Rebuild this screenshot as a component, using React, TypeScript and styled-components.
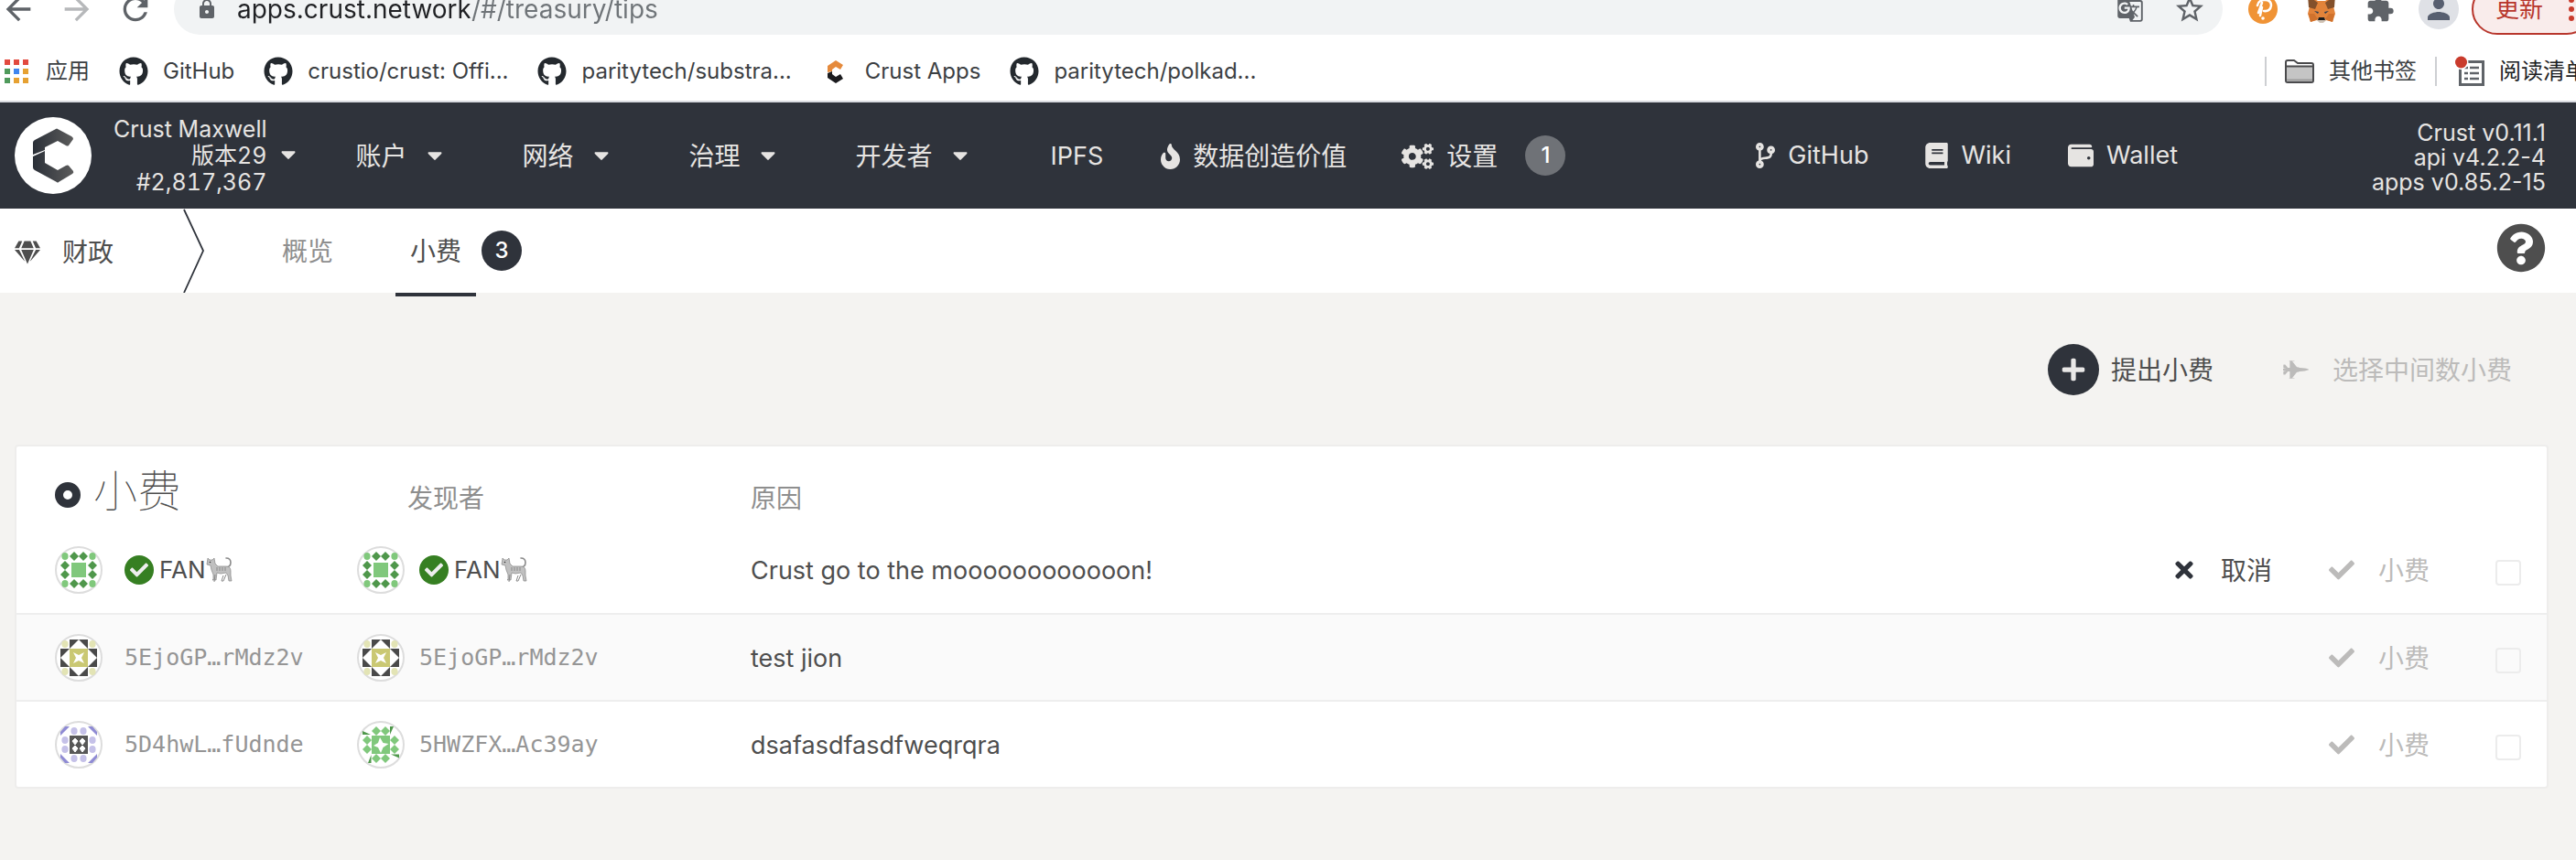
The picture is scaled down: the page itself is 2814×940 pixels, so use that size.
import React from 'react';
import styled, { createGlobalStyle } from 'styled-components';
import {
  FaBook, FaCheck, FaCodeBranch, FaCogs, FaFighterJet, FaFire, FaGem, FaGithub,
  FaPlus, FaQuestionCircle, FaTimes, FaWallet,
} from 'react-icons/fa';
import { MdArrowBack, MdArrowForward, MdExtension, MdGTranslate, MdLock, MdPerson, MdRefresh, MdStarBorder } from 'react-icons/md';

const ink = '#2f333b';
const text = '#4e4e4e';
const muted = '#8e8e8e';
const faded = '#bcbbba';
const chrome = '#5f6368';

const GlobalStyle = createGlobalStyle`
  * { box-sizing: border-box; }
  body {
    margin: 0;
    overflow: hidden;
    background: #f4f3f1;
    color: ${text};
    font: 28px/36px Inter, "Noto Sans CJK SC", sans-serif;
  }
  svg { display: block; flex: none; }
  a { color: inherit; text-decoration: none; }
  button { font: inherit; color: inherit; background: none; border: 0; padding: 0; cursor: pointer; }
`;

/* Browser bars */

const Browser = styled.header`
  background: #fff;
  border-bottom: 2px solid #d9dbe0;
  overflow: hidden;
`;

const Toolbar = styled.div`
  display: flex;
  align-items: center;
  height: 56px;
  margin: -18px 0 8px;
`;

const HistoryButtons = styled.div`
  display: flex;
  gap: 24px;
  width: 190px;
  color: ${chrome};
`;

const ToolButton = styled.button<{ $off?: boolean }>`
  display: flex;
  opacity: ${p => (p.$off ? 0.45 : 1)};
`;

const AddressBar = styled.div`
  flex: 1;
  display: flex;
  align-items: center;
  height: 56px;
  padding: 0 18px 0 24px;
  border-radius: 28px;
  background: #f1f3f4;
  color: ${chrome};
`;

const AddressInput = styled.input`
  flex: 1;
  height: 56px;
  margin-left: 21px;
  padding: 0;
  border: 0;
  outline: 0;
  font: inherit;
  color: transparent;
  background: linear-gradient(to right, #202124 254px, #6f7478 254px);
  -webkit-background-clip: text;
  background-clip: text;
`;

const AddressTools = styled.div`
  display: flex;
  align-items: center;
  gap: 32px;
`;

const Extensions = styled.div`
  display: flex;
  align-items: center;
  gap: 32px;
  padding: 0 14px 0 28px;
  color: ${chrome};
`;

const Avatar = styled.button`
  display: grid;
  place-items: center;
  width: 44px;
  height: 44px;
  margin-left: -6px;
  border-radius: 22px;
  background: #dfe1e6;
  color: #575f70;
`;

const UpdateButton = styled.button`
  display: flex;
  align-items: center;
  gap: 28px;
  height: 56px;
  margin-right: -18px;
  padding: 0 18px 0 24px;
  border: 2px solid #b8362c;
  border-radius: 28px;
  background: #f9eceb;
  color: #b8362c;
  font-size: 26px;
`;

const Bookmarks = styled.nav`
  display: flex;
  align-items: center;
  height: 64px;
  padding-left: 2px;
  color: #3c4043;
  font-size: 24px;
  white-space: nowrap;
`;

const Bookmark = styled.a`
  display: flex;
  align-items: center;
  gap: 16px;
  margin-right: 32px;
`;

const OtherBookmarks = styled.div`
  display: flex;
  align-items: center;
  gap: 20px;
  margin-left: auto;
  margin-right: -12px;
`;

const OtherButton = styled.button<{ $dark?: boolean }>`
  display: flex;
  align-items: center;
  gap: 16px;
  color: ${p => (p.$dark ? '#202124' : '#3c4043')};
`;

const Separator = styled.span`
  width: 2px;
  height: 32px;
  background: #cdcfd2;
`;

/* Application header */

const Menu = styled.div`
  display: flex;
  align-items: center;
  justify-content: space-between;
  height: 116px;
  padding: 0 33px 0 16px;
  background: ${ink};
  color: #e6e4e2;
  white-space: nowrap;
`;

const MenuGroup = styled.div`
  display: flex;
  align-items: center;
`;

const ChainButton = styled.button`
  display: flex;
  align-items: center;
  gap: 15px;
  margin: 0 36px 0 24px;
  font-size: 25px;
  line-height: 29px;
  font-variant-numeric: tabular-nums;
  text-align: right;
`;

const MenuLink = styled.a<{ $dropdown?: boolean }>`
  display: flex;
  align-items: center;
  gap: ${p => (p.$dropdown ? 22 : 14)}px;
  padding: 2px ${p => (p.$dropdown ? 58 : 30)}px 0 30px;
`;

const Glyph = styled.span<{ $width: number }>`
  svg {
    width: ${p => p.$width}px;
    height: 28px;
  }
`;

const Latin = styled.span`
  padding: 0 3px;
  font-size: 27px;
`;

const MainLinks = styled.nav`
  display: flex;
`;

const SideLinks = styled.nav`
  display: flex;
  gap: 62px;
  padding-right: 4px;
`;

const SideLink = styled.a`
  display: flex;
  align-items: center;
  gap: 14px;
  font-size: 27px;
`;

const Badge = styled.span<{ $light?: boolean }>`
  display: grid;
  place-items: center;
  width: 44px;
  height: 44px;
  border-radius: 22px;
  background: ${p => (p.$light ? '#6f7277' : ink)};
  color: #fff;
  font-size: 24px;
  font-weight: 500;
`;

const Versions = styled.div`
  padding-top: 4px;
  font-size: 25px;
  line-height: 27px;
  text-align: right;
`;

/* Section tabs */

const TabBar = styled.div`
  display: flex;
  align-items: center;
  height: 92px;
  padding: 0 33px 0 16px;
  background: #fff;
`;

const Section = styled.h1`
  display: flex;
  align-items: center;
  gap: 24px;
  margin: 0 76px 0 0;
  padding-top: 4px;
  font-size: 28px;
  font-weight: 400;
`;

const Tabs = styled.nav`
  display: flex;
  align-items: center;
  gap: 52px;
  margin-left: 68px;
`;

const TabGroup = styled.div`
  display: flex;
  align-items: center;
  gap: 6px;
`;

const Tab = styled.button<{ $active?: boolean }>`
  height: 96px;
  margin-bottom: -4px;
  padding: 2px 16px 0;
  border-bottom: 4px solid ${p => (p.$active ? ink : 'transparent')};
  color: ${p => (p.$active ? text : muted)};
`;

const HelpButton = styled.button`
  margin-left: auto;
  padding-bottom: 6px;
  font-size: 54px;
`;

/* Page content */

const Content = styled.main`
  padding: 56px 30px 0 16px;
`;

const Actions = styled.div`
  display: flex;
  justify-content: flex-end;
  gap: 76px;
  padding: 0 40px 0 0;
`;

const ActionButton = styled.button`
  display: inline-flex;
  align-items: center;
  gap: 26px;
  &:disabled { color: ${faded}; }
`;

const AddButton = styled(ActionButton)`
  gap: 13px;
`;

const ActionLabel = styled.span`
  padding-top: 2px;
`;

const ActionIcon = styled.span`
  display: grid;
  place-items: center;
  width: 28px;
`;

const AddIcon = styled.span`
  display: grid;
  place-items: center;
  width: 56px;
  height: 56px;
  border-radius: 28px;
  background: ${ink};
  color: #e9e8e7;
`;

const Card = styled.section`
  margin-top: 54px;
  border: 2px solid #eeedec;
  border-radius: 4px;
  background: #fff;
`;

const TipTable = styled.table`
  width: 100%;
  table-layout: fixed;
  border-collapse: separate;
  border-spacing: 0;
  text-align: left;
`;

const Col = styled.col<{ $width?: number }>`
  width: ${p => (p.$width ? `${p.$width}px` : 'auto')};
`;

const HeadCell = styled.th<{ $indent?: number }>`
  height: 87px;
  padding: 26px 0 0 ${p => p.$indent || 0}px;
  color: ${muted};
  font-weight: 400;
`;

const Title = styled.h2`
  display: flex;
  align-items: center;
  gap: 14px;
  margin: -16px 0 0;
  color: ${text};
  font-size: 48px;
  line-height: 56px;
  font-weight: 100;
`;

const TitleDot = styled.span`
  width: 28px;
  height: 28px;
  margin-top: 8px;
  border: 9px solid ${ink};
  border-radius: 14px;
`;

const Row = styled.tr`
  &:nth-child(even) { background: #fafafa; }
`;

const Cell = styled.td<{ $indent?: number }>`
  height: 95px;
  padding: 0 0 0 ${p => p.$indent || 0}px;
  ${Row}:not(:first-child) & { border-top: 2px solid #eeeeee; }
`;

const ReasonCell = styled(Cell)`
  padding-top: 2px;
  font-size: 27px;
`;

const Account = styled.div<{ $gap: number }>`
  display: flex;
  align-items: center;
  gap: ${p => p.$gap}px;
`;

const Face = styled.span`
  width: 52px;
  height: 52px;
  padding: 4px;
  border: 2px solid #dddddd;
  border-radius: 26px;
  background: #fff;
`;

const Address = styled.span`
  color: #959595;
  font-family: "DejaVu Sans Mono", monospace;
  font-size: 25px;
`;

const Name = styled.span`
  display: flex;
  align-items: center;
  font-size: 26px;
`;

const Verified = styled.span`
  display: grid;
  place-items: center;
  width: 32px;
  height: 32px;
  margin-right: 6px;
  border-radius: 16px;
  background: #367f22;
  color: #eeeeee;
`;

const RowActions = styled.div`
  display: flex;
  align-items: center;
  justify-content: flex-end;
  gap: 62px;
  padding-right: 28px;
`;

const Tick = styled.input`
  appearance: none;
  width: 28px;
  height: 28px;
  margin: 6px 0 0 10px;
  border: 2px solid #ececec;
  border-radius: 4px;
`;

/* Drawings */

const Caret = () => (
  <svg width="16" height="10" viewBox="0 0 17 10"><path d="M1 0h15q1 1 0 2L9 9q-.5.6-1 0L1 2Q0 1 1 0z" fill="currentColor" /></svg>
);

const AppsGrid = () => {
  const colors = ['#e24a3f', '#e24a3f', '#e24a3f', '#4f9a5b', '#3f86f0', '#e6a132', '#4f9a5b', '#e6a132', '#e6a132'];
  return (
    <svg width="32" height="28" viewBox="0 0 32 28">
      {colors.map((c, i) => <rect key={i} x={3 + (i % 3) * 10} y={1 + Math.floor(i / 3) * 10} width="6" height="6" fill={c} />)}
    </svg>
  );
};

const CrustMark = () => (
  <svg width="32" height="32" viewBox="0 0 32 32">
    <path d="M7 17V10L16 4l8 5-3 5-5-3-4 3v2z" fill="#e58a3c" />
    <path d="M7 18l5-2v3l4 3 5-3 3 5-8 5-9-6z" fill="#1b1b1e" />
  </svg>
);

const CrustLogo = () => (
  <svg width="84" height="84" viewBox="0 0 84 84">
    <defs>
      <linearGradient id="crust" x1="0" x2="1"><stop offset="0" stopColor="#2b3038" /><stop offset="1" stopColor="#5c5c5c" /></linearGradient>
    </defs>
    <circle cx="42" cy="42" r="42" fill="#fff" />
    <path d="M20 41V28q0-2 2-3l23-12q1-1 2 0l15 8q2 1 2 3l-5 7q-1 1-3 0l-9-5-14 7v3z" fill="url(#crust)" />
    <path d="M20 43l13-6v13l14 8 9-5q2-1 3 0l5 6q1 2-1 3l-15 9q-1 1-2 0L22 58q-2-1-2-3z" fill="url(#crust)" />
  </svg>
);

const PeerMark = () => (
  <svg width="32" height="32" viewBox="0 0 32 32">
    <circle cx="16" cy="16" r="16" fill="#f09335" />
    <path d="M11 20L15 9M10 12Q11 6 18 6t7 6q-1 7-8 6M15 14l-2 9" fill="none" stroke="#fff" strokeWidth="2.5" strokeLinecap="round" />
    <circle cx="16" cy="26" r="1.8" fill="#fff" />
  </svg>
);

const Fox = () => (
  <svg width="32" height="34" viewBox="0 0 32 34">
    <path d="M1 2l11 6h8l11-6-2 12 2 8-3 9-7-2-3 2h-4l-3-2-7 2-3-9 2-8z" fill="#e2833a" />
    <path d="M1 2l11 8-3 7-7-2zM31 2L20 10l3 7 7-2z" fill="#83502b" />
    <path d="M2 22l6 0 4 6-8 3zM30 22h-6l-4 6 8 3z" fill="#d0722d" />
    <path d="M8 19l5 1-1 2zM24 19l-5 1 1 2z" fill="#2b3d52" />
    <path d="M11 29l2-2h6l2 2-3 3h-4z" fill="#cfc2b4" />
    <path d="M13 26h6l1 3h-8z" fill="#1c1c1c" />
  </svg>
);

const Folder = () => (
  <svg width="32" height="26" viewBox="0 0 32 26">
    <path d="M1 23V3q0-2 2-2h7l4 3h15q2 0 2 2v17q0 2-2 2H3q-2 0-2-2z" fill="#fff" stroke="#4a4a4c" strokeWidth="2" />
    <path d="M2 8h28v16H2z" fill="#c5c5c5" />
    <path d="M1 7.5h30" stroke="#4a4a4c" strokeWidth="2" />
    <path d="M2 22.5h28" stroke="#9c9c9c" strokeWidth="2" />
  </svg>
);

const ReadingList = () => (
  <svg width="32" height="34" viewBox="0 0 32 34">
    <rect x="5.5" y="6.5" width="25" height="25" fill="#fff" stroke={chrome} strokeWidth="3" />
    <path d="M10 13h4M10 19h4M10 25h4M16 13h10M16 19h10M16 25h10" stroke={chrome} strokeWidth="2.6" />
    <circle cx="6.5" cy="7" r="8" fill="#fff" />
    <circle cx="6.5" cy="7" r="6.5" fill="#c93b2c" />
  </svg>
);

const Dots = () => (
  <svg width="6" height="26" viewBox="0 0 6 26" fill="#c93b2c"><circle cx="3" cy="3" r="3" /><circle cx="3" cy="13" r="3" /><circle cx="3" cy="23" r="3" /></svg>
);

const Chevron = () => (
  <svg width="24" height="92" viewBox="0 0 24 92"><path d="M1 1l21 45L1 92" fill="none" stroke={ink} strokeWidth="1.8" /></svg>
);

const Cat = () => (
  <svg width="29" height="29" viewBox="0 0 29 29" role="img" aria-label="cat">
    <path d="M21 12q6 0 6-5t-5-5" fill="none" stroke="#8a8a8a" strokeWidth="1.6" strokeLinecap="round" />
    <path d="M2 2l2 2h3l2-2 1 6 3 3h9q5 0 5 5v5l1 6h-3l-1-6-2-3-6 1-4-1-1 8H7l1-1V20L6 15l-1-5-4-1z" fill="#c0c0c0" stroke="#858585" strokeWidth=".7" />
    <path d="M10 20L9 28M22 20l-3 7h-2l2-6M12 12v4M15 12v4M18 12v4M21 12v4" fill="none" stroke="#8a8a8a" strokeWidth="1" />
    <circle cx="4.5" cy="6.5" r=".8" fill="#333" />
  </svg>
);

type FaceKind = 'clover' | 'olive' | 'violet' | 'leaf';

const edgeCells = [[15, 5], [25, 5], [15, 35], [25, 35], [5, 15], [5, 25], [35, 15], [35, 25]];
const cornerCells = [[5, 5], [35, 5], [5, 35], [35, 35]];

const Diamonds = ({ fill }: { fill: string }) => (
  <g fill={fill}>{edgeCells.map(([x, y]) => <path key={`${x}-${y}`} d={`M${x} ${y - 5}l5 5-5 5-5-5z`} />)}</g>
);

const Circles = ({ cells, fill }: { cells: number[][]; fill: string }) => (
  <g fill={fill}>{cells.map(([x, y]) => <ellipse key={`${x}-${y}`} cx={x} cy={y} rx="3.6" ry="4.1" />)}</g>
);

const faces: Record<FaceKind, React.ReactNode> = {
  clover: (
    <>
      <Circles cells={cornerCells} fill="#80c87c" />
      <Diamonds fill="#4f974b" />
      <path d="M12 12h16v16H12z" fill="#80c87c" />
    </>
  ),
  olive: (
    <>
      <Circles cells={cornerCells} fill="#e3e4b5" />
      <path d="M10 0h20v40H10zM0 10h40v20H0z" fill="#4a4a4a" />
      <path d="M20 0l20 20-20 20L0 20z" fill="#fff" />
      <path d="M10 10h20v20H10z" fill="#cac873" />
      <path d="M14 14l6 3 6-3-3 6 3 6-6-3-6 3 3-6z" fill="#fff" />
    </>
  ),
  violet: (
    <>
      <Circles cells={edgeCells} fill="#c5c1e8" />
      <path d="M0 6L5 0h5L0 10zM40 6L35 0h-5l10 10zM0 34l5 6h5L0 30zM40 34l-5 6h-5l10-10z" fill="#8f8bd4" />
      <path d="M10 10h20v20H10z" fill="#575757" />
      <path d="M16 13l3 3-3 4-3-4zM24 13l3 3-3 4-3-4zM16 21l3 3-3 4-3-4zM24 21l3 3-3 4-3-4z" fill="#fff" stroke="#fff" />
    </>
  ),
  leaf: (
    <>
      <Diamonds fill="#80c87c" />
      <path d="M0 5l9 4H0zM30 0h4l-4 9zM31 30.5h9v4zM9.5 31v9H6z" fill="#4f974b" />
      <path d="M10 10h20v20H10z" fill="#80c87c" />
      <path d="M19 12l3.5 6 6 1-6 4-2.5 6-3-6-5-2 5-3z" fill="#fff" />
    </>
  ),
};

const Identicon = ({ kind }: { kind: FaceKind }) => (
  <Face><svg width="40" height="40" viewBox="0 0 40 40">{faces[kind]}</svg></Face>
);

/* Data */

interface Person { face: FaceKind; address?: string; name?: string }

const fan: Person = { face: 'clover', name: 'FAN' };
const test: Person = { face: 'olive', address: '5EjoGP…rMdz2v' };

const tips: { who: Person; finder: Person; reason: string; cancel?: boolean }[] = [
  { who: fan, finder: fan, reason: 'Crust go to the moooooooooooon!', cancel: true },
  { who: test, finder: test, reason: 'test jion' },
  { who: { face: 'violet', address: '5D4hwL…fUdnde' }, finder: { face: 'leaf', address: '5HWZFX…Ac39ay' }, reason: 'dsafasdfasdfweqrqra' },
];

const PersonLine = ({ person, gap }: { person: Person; gap: number }) => (
  <Account $gap={gap}>
    <Identicon kind={person.face} />
    {person.name
      ? <Name><Verified><FaCheck size={20} /></Verified>{person.name}<Cat /></Name>
      : <Address>{person.address}</Address>}
  </Account>
);

export default function App() {
  return (
    <>
      <GlobalStyle />
      <Browser>
        <Toolbar>
          <HistoryButtons>
            <ToolButton aria-label="Back"><MdArrowBack size={40} /></ToolButton>
            <ToolButton aria-label="Forward" $off><MdArrowForward size={40} /></ToolButton>
            <ToolButton aria-label="Reload"><MdRefresh size={40} /></ToolButton>
          </HistoryButtons>
          <AddressBar>
            <MdLock size={24} />
            <AddressInput aria-label="Address" defaultValue="apps.crust.network/#/treasury/tips" />
            <AddressTools>
              <ToolButton aria-label="Translate"><MdGTranslate size={30} /></ToolButton>
              <ToolButton aria-label="Bookmark"><MdStarBorder size={36} /></ToolButton>
            </AddressTools>
          </AddressBar>
          <Extensions>
            <ToolButton aria-label="Peer extension"><PeerMark /></ToolButton>
            <ToolButton aria-label="Fox wallet"><Fox /></ToolButton>
            <ToolButton aria-label="Extensions"><MdExtension size={32} /></ToolButton>
            <Avatar aria-label="Profile"><MdPerson size={36} /></Avatar>
          </Extensions>
          <UpdateButton>更新<Dots /></UpdateButton>
        </Toolbar>
        <Bookmarks>
          <Bookmark href="#apps"><AppsGrid />应用</Bookmark>
          <Bookmark href="#github"><FaGithub size={32} color="#24292e" />GitHub</Bookmark>
          <Bookmark href="#crust"><FaGithub size={32} color="#24292e" />crustio/crust: Offi...</Bookmark>
          <Bookmark href="#substrate"><FaGithub size={32} color="#24292e" />paritytech/substra...</Bookmark>
          <Bookmark href="#crust-apps"><CrustMark />Crust Apps</Bookmark>
          <Bookmark href="#polkadot"><FaGithub size={32} color="#24292e" />paritytech/polkad...</Bookmark>
          <OtherBookmarks>
            <Separator />
            <OtherButton><Folder />其他书签</OtherButton>
            <Separator />
            <OtherButton $dark><ReadingList />阅读清单</OtherButton>
          </OtherBookmarks>
        </Bookmarks>
      </Browser>

      <Menu>
        <MenuGroup>
          <CrustLogo />
          <ChainButton>
            <span>Crust Maxwell<br />版本29<br />#2,817,367</span>
            <Caret />
          </ChainButton>
          <MainLinks>
            {['账户', '网络', '治理', '开发者'].map(label => (
              <MenuLink key={label} href="#menu" $dropdown>{label}<Caret /></MenuLink>
            ))}
            <MenuLink href="#ipfs"><Latin>IPFS</Latin></MenuLink>
            <MenuLink href="#data"><Glyph $width={21}><FaFire /></Glyph>数据创造价值</MenuLink>
            <MenuLink href="#settings"><Glyph $width={35}><FaCogs /></Glyph>设置</MenuLink>
          </MainLinks>
          <Badge $light>1</Badge>
        </MenuGroup>
        <SideLinks>
          <SideLink href="#github"><Glyph $width={21}><FaCodeBranch /></Glyph>GitHub</SideLink>
          <SideLink href="#wiki"><Glyph $width={25}><FaBook /></Glyph>Wiki</SideLink>
          <SideLink href="#wallet"><Glyph $width={28}><FaWallet /></Glyph>Wallet</SideLink>
        </SideLinks>
        <Versions>Crust v0.11.1<br />api v4.2.2-4<br />apps v0.85.2-15</Versions>
      </Menu>

      <TabBar>
        <Section><FaGem size={28} />财政</Section>
        <Chevron />
        <Tabs>
          <Tab>概览</Tab>
          <TabGroup><Tab $active>小费</Tab><Badge>3</Badge></TabGroup>
        </Tabs>
        <HelpButton aria-label="Help"><FaQuestionCircle /></HelpButton>
      </TabBar>

      <Content>
        <Actions>
          <AddButton><AddIcon><FaPlus size={28} /></AddIcon><ActionLabel>提出小费</ActionLabel></AddButton>
          <ActionButton disabled><ActionIcon><FaFighterJet size={28} /></ActionIcon><ActionLabel>选择中间数小费</ActionLabel></ActionButton>
        </Actions>
        <Card>
          <TipTable>
            <colgroup><Col $width={372} /><Col $width={430} /><Col /><Col $width={480} /></colgroup>
            <thead>
              <tr>
                <HeadCell $indent={42}><Title><TitleDot />小费</Title></HeadCell>
                <HeadCell $indent={55}>发现者</HeadCell>
                <HeadCell>原因</HeadCell>
                <HeadCell aria-label="操作" />
              </tr>
            </thead>
            <tbody>
              {tips.map((tip, i) => (
                <Row key={i}>
                  <Cell $indent={42}><PersonLine person={tip.who} gap={24} /></Cell>
                  <Cell><PersonLine person={tip.finder} gap={16} /></Cell>
                  <ReasonCell>{tip.reason}</ReasonCell>
                  <Cell>
                    <RowActions>
                      {tip.cancel && <ActionButton><ActionIcon><FaTimes size={28} color={ink} /></ActionIcon><ActionLabel>取消</ActionLabel></ActionButton>}
                      <ActionButton disabled><ActionIcon><FaCheck size={28} /></ActionIcon><ActionLabel>小费</ActionLabel></ActionButton>
                      <Tick type="checkbox" aria-label={tip.reason} />
                    </RowActions>
                  </Cell>
                </Row>
              ))}
            </tbody>
          </TipTable>
        </Card>
      </Content>
    </>
  );
}
